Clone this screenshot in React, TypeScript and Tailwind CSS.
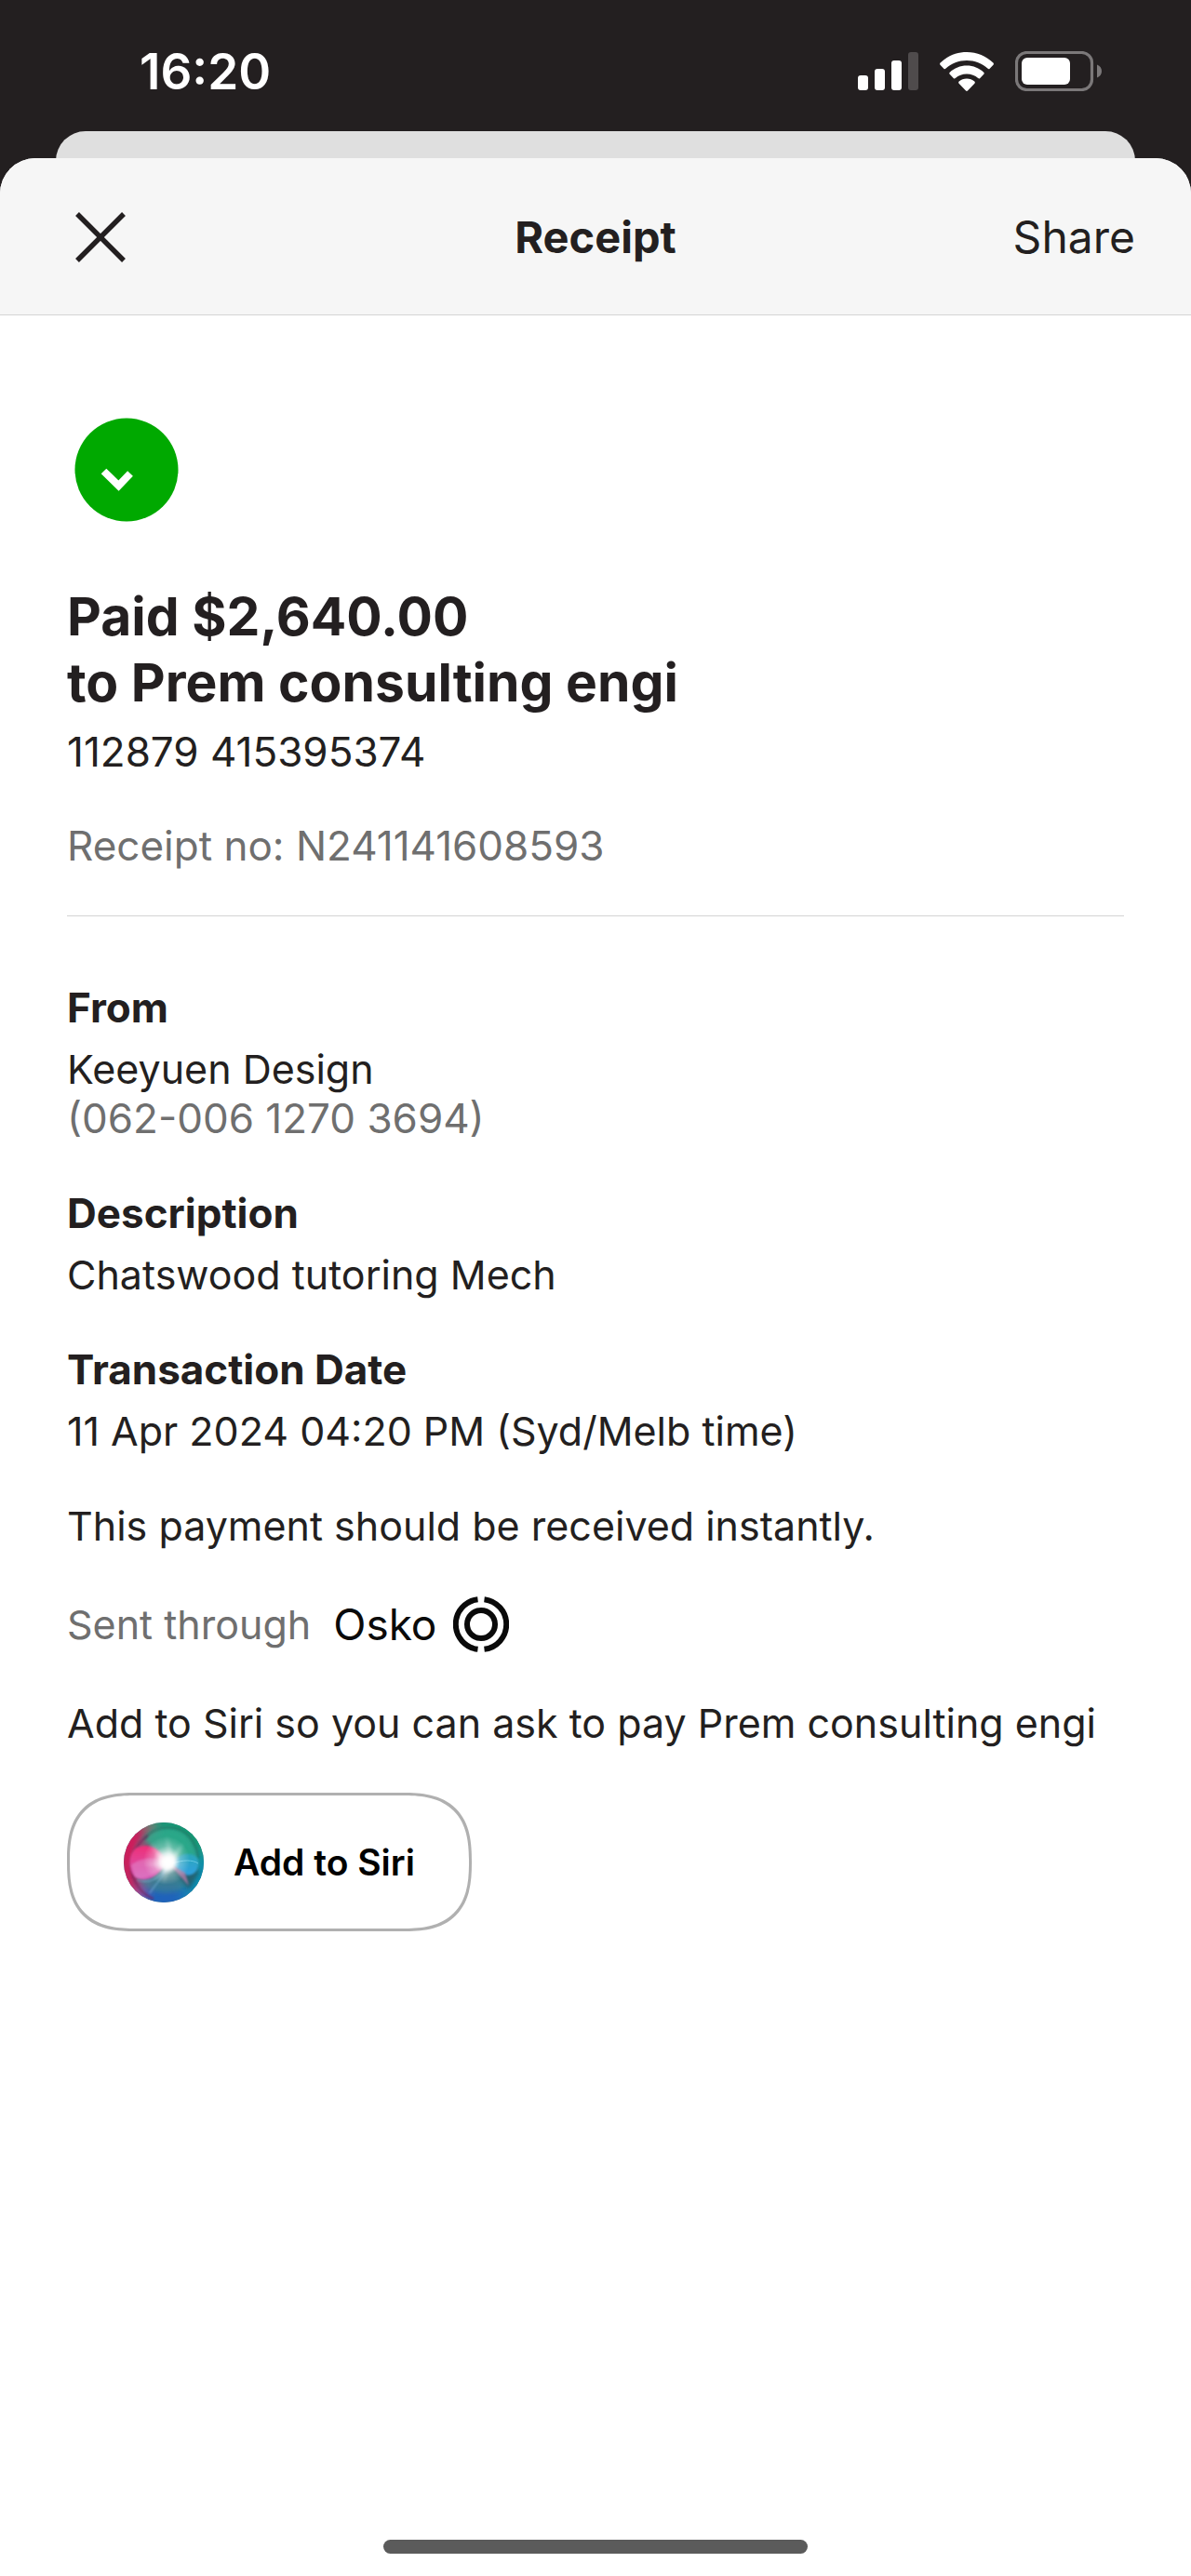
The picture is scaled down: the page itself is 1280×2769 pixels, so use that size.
import React from "react";

function SignalIcon() {
  return (
    <svg width="65" height="42" viewBox="0 0 65 42" aria-label="Mobile signal" className="shrink-0">
      <rect x="0" y="25" width="11" height="16" rx="3" fill="#fff" />
      <rect x="18" y="18" width="11" height="23" rx="3" fill="#fff" />
      <rect x="36" y="9" width="11" height="32" rx="3" fill="#fff" />
      <rect x="54" y="0" width="11" height="41" rx="3" fill="#4f4b4c" />
    </svg>
  );
}

function WifiIcon() {
  return (
    <svg width="58" height="42" viewBox="0 0 58 42" aria-label="Wi-Fi" className="shrink-0" fill="#fff">
      <path d="M29 0C18 0 8 4.300 .6 11.600c-.7.700-.7 1.400-.1 2.100l3.800 4c.6.700 1.400.700 2 .1C12.500 12 20.500 9 29 9s16.500 3 22.700 8.800c.6.600 1.400.600 2-.1l3.800-4c.6-.7.6-1.400-.1-2.100C50 4.300 40 0 29 0Z" />
      <path d="M29 14.500c-7 0-13.400 2.700-18.200 7.200-.7.700-.7 1.400-.1 2.100l4 4.200c.6.700 1.400.700 2.100.1C20.100 25.100 24.300 23.500 29 23.500s8.900 1.600 12.200 4.600c.7.600 1.500.6 2.100-.1l4-4.200c.6-.7.6-1.400-.1-2.100C42.400 17.200 36 14.500 29 14.500Z" />
      <path d="M29 28.500c-3.200 0-6.100 1.200-8.300 3.100-.7.600-.7 1.400-.1 2.100l7.200 7.600c.8.800 1.600.8 2.400 0l7.200-7.600c.6-.7.6-1.500-.1-2.100-2.200-1.900-5.100-3.100-8.300-3.100Z" />
    </svg>
  );
}

function BatteryIcon() {
  return (
    <svg width="93" height="43" viewBox="0 0 93 43" aria-label="Battery" className="shrink-0">
      <rect x="1.500" y="1.500" width="81" height="40" rx="11" fill="none" stroke="#7b7879" strokeWidth="3.200" />
      <rect x="7" y="7" width="52" height="29" rx="6" fill="#fff" />
      <path d="M88 14.500c3.300 1.200 5 4 5 7s-1.700 5.800-5 7Z" fill="#7b7879" />
    </svg>
  );
}

function PaidBadge() {
  return (
    <svg width="112" height="112" viewBox="0 0 112 112" aria-label="Paid" className="ml-2 block">
      <circle cx="56" cy="56" r="55.500" fill="#00a900" />
      <path d="M31.500 57.500 47.500 73 60 60" fill="none" stroke="#fff" strokeWidth="8" />
    </svg>
  );
}

function OskoRings() {
  return (
    <svg width="60" height="62" viewBox="0 0 60 62" aria-hidden="true" fill="none" stroke="#0a0a0a">
      <circle cx="30" cy="31" r="15" strokeWidth="6" />
      <path d="M26.500 4.200a27 27 0 0 0 0 53.600M33.500 4.200a27 27 0 0 1 0 53.600" strokeWidth="6" />
    </svg>
  );
}

function SiriOrb() {
  return (
    <svg width="86" height="86" viewBox="0 0 86 86" aria-hidden="true" className="shrink-0">
      <defs>
        <clipPath id="orb"><circle cx="43" cy="43" r="43" /></clipPath>
        <filter id="soft9" x="-50%" y="-50%" width="200%" height="200%"><feGaussianBlur stdDeviation="8" /></filter>
        <filter id="soft2" x="-50%" y="-50%" width="200%" height="200%"><feGaussianBlur stdDeviation="2" /></filter>
        <filter id="soft1" x="-50%" y="-50%" width="200%" height="200%"><feGaussianBlur stdDeviation="0.800" /></filter>
        <radialGradient id="glow">
          <stop offset="0" stopColor="#fff" />
          <stop offset=".3" stopColor="#fff" stopOpacity=".85" />
          <stop offset=".6" stopColor="#fff" stopOpacity=".3" />
          <stop offset="1" stopColor="#fff" stopOpacity="0" />
        </radialGradient>
        <linearGradient id="pink" x1="0" y1="0" x2="0" y2="1">
          <stop offset="0" stopColor="#ee2f78" />
          <stop offset="1" stopColor="#d35ab8" />
        </linearGradient>
        <linearGradient id="blue" x1="0" y1="0" x2="0" y2="1">
          <stop offset="0" stopColor="#2ba7b8" />
          <stop offset="1" stopColor="#2f9fe0" />
        </linearGradient>
      </defs>
      <g clipPath="url(#orb)">
        <rect width="86" height="86" fill="#3c7480" />
        <g filter="url(#soft9)">
          <path d="M22-10H96V38H50Z" fill="#139a74" />
          <path d="M-10 10 20-8 30 30 14 60 30 90H-10Z" fill="#cf1d5c" />
          <path d="M18 66 50 68 74 66 80 96H14Z" fill="#1a62be" />
          <path d="M68 36H100V90H66Z" fill="#0d8fb0" />
        </g>
        <circle cx="45" cy="40" r="36" fill="#4a8f8c" opacity=".4" filter="url(#soft2)" />
        <path d="M22 18C34 4 58 2 70 18c8 10 10 22 4 22L46 38Z" fill="#2cae8d" opacity=".75" filter="url(#soft2)" />
        <path d="M22 18C34 2 62 0 74 20c4 7 6 13 6 18" fill="none" stroke="#176b5a" strokeWidth="1.500" opacity=".7" filter="url(#soft1)" />
        <path d="M26 14C12 24 4 42 10 58c4 12 12 20 22 24" fill="none" stroke="#741b58" strokeWidth="2" opacity=".7" filter="url(#soft1)" />
        <path d="M50 46 82 52 70 72Z" fill="#24515f" opacity=".7" filter="url(#soft2)" />
        <path d="M46 42C38 26 24 22 14 27 4 33 4 52 13 59c12 7 26-2 33-17Z" fill="url(#pink)" filter="url(#soft1)" />
        <path d="M8 46C20 36 34 38 48 43 34 56 20 64 12 58" fill="#e28acb" opacity=".5" filter="url(#soft1)" />
        <path d="M52 43C60 32 72 32 78 37c4 5 2 15-3 18-8 5-17-2-23-12Z" fill="url(#blue)" filter="url(#soft1)" />
        <path d="M52 44C64 40 74 40 80 44" fill="none" stroke="#7fd5ee" strokeWidth="1" opacity=".7" />
        <path d="M48 44 70 68 66 54Z" fill="#b07aa8" opacity=".8" filter="url(#soft1)" />
        <path d="M48 44C40 62 26 66 14 62M48 46C42 60 34 66 28 76" fill="none" stroke="#7fb8e0" strokeWidth="1.200" opacity=".7" filter="url(#soft1)" />
        <ellipse cx="46" cy="41" rx="25" ry="26" fill="url(#glow)" opacity=".9" />
        <path d="M48 42 46 14 52 36 64 22 56 40ZM46 40 28 22 42 44 20 44 44 48 42 66 50 48Z" fill="#fff" opacity=".45" filter="url(#soft2)" />
        <circle cx="48" cy="43" r="8" fill="#fff" filter="url(#soft2)" />
      </g>
    </svg>
  );
}

function Detail({ label, children }: { label: string; children: React.ReactNode }) {
  return (
    <div className="flex flex-col gap-[13px]">
      <dt className="text-[44px] font-bold">{label}</dt>
      <dd>{children}</dd>
    </div>
  );
}

export default function App() {
  return (
    <div className="flex min-h-screen flex-col bg-[#231f20] font-['Inter',sans-serif] text-[43px] leading-[53px] text-[#231f20]">
      <div className="flex h-[141px] items-center justify-between pt-3 pr-24 pl-[150px] text-white">
        <span className="text-[53px] leading-[64px] font-semibold">16:20</span>
        <div className="flex items-center gap-[23px]">
          <SignalIcon />
          <WifiIcon />
          <BatteryIcon />
        </div>
      </div>
      <div className="mx-[60px] -mb-4 h-[45px] rounded-t-[32px] bg-[#dfdfdf]" />

      <div className="relative flex grow flex-col overflow-hidden rounded-t-[38px] bg-white">
        <header className="grid h-[169px] grid-cols-3 items-center border-b border-[#d4d4d4] bg-[#f6f6f6] px-[60px] pt-0.5">
          <button type="button" aria-label="Close" className="justify-self-start pl-5">
            <svg width="56" height="56" viewBox="0 0 56 56" fill="none" stroke="#231f20" strokeWidth="5.500">
              <path d="M3 3 53 53M53 3 3 53" />
            </svg>
          </button>
          <h1 className="justify-self-center text-[47px] leading-[56px] font-bold">Receipt</h1>
          <button type="button" className="justify-self-end text-[48px] leading-[56px]">Share</button>
        </header>

        <main className="flex flex-col items-stretch px-[72px] pt-[110px]">
          <PaidBadge />
          <h2 className="mt-[66px] text-[57px] leading-[71px] font-bold">
            Paid $2,640.00
            <br />
            to Prem consulting engi
          </h2>
          <p className="mt-[13px] text-[44px]">112879 415395374</p>
          <p className="mt-12 text-[44px] text-[#6f6f6f]">Receipt no: N241141608593</p>
          <hr className="mt-12 border-t border-[#d4d4d4]" />

          <dl className="mt-[72px] flex flex-col gap-[49px]">
            <Detail label="From">
              Keeyuen Design
              <br />
              <span className="text-[44px] text-[#6f6f6f]">(062-006 1270 3694)</span>
            </Detail>
            <Detail label="Description">Chatswood tutoring Mech</Detail>
            <Detail label="Transaction Date">11 Apr 2024 04:20 PM (Syd/Melb time)</Detail>
          </dl>

          <p className="mt-[49px]">This payment should be received instantly.</p>
          <div className="mt-12 flex items-center">
            <span className="text-[#6f6f6f]">Sent through</span>
            <span className="ml-6 text-[46px] text-[#0a0a0a]">Osko</span>
            <span className="ml-[18px]"><OskoRings /></span>
          </div>
          <p className="mt-[49px]">Add to Siri so you can ask to pay Prem consulting engi</p>
          <button
            type="button"
            className="mt-12 flex h-[149px] items-center gap-8 self-start rounded-[74px] border-[3px] border-[#b0b0b0] px-[58px] text-[39px] font-semibold text-black [corner-shape:superellipse(1.4)]"
          >
            <SiriOrb />
            Add to Siri
          </button>
        </main>

        <div className="mt-auto flex justify-center pb-6">
          <div className="h-[15px] w-[456px] rounded-full bg-[#5b5b5b]" />
        </div>
      </div>
    </div>
  );
}
